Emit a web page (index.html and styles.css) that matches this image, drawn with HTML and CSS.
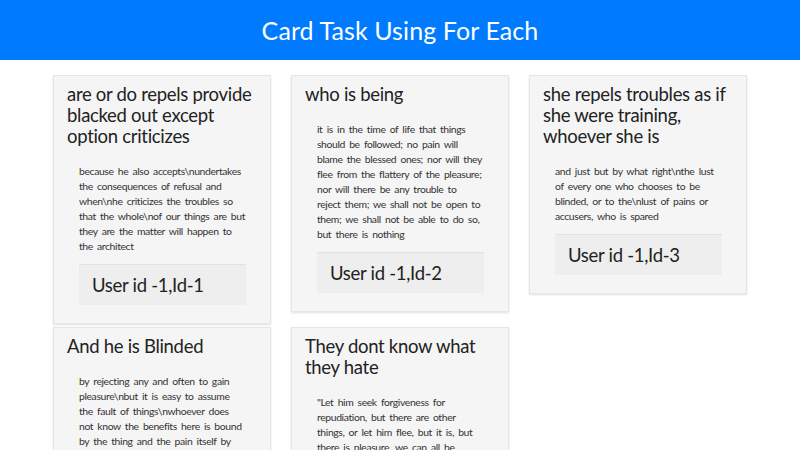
FILE: index.html
```html
<!DOCTYPE html>
<html>
<head>
<meta charset="utf-8">
<link rel="stylesheet" href="styles.css">
</head>
<body>
<header class="topbar"><h1 class="topbar-title">Card Task Using For Each</h1></header>
<main class="cards">
  <div class="card">
    <h2 class="card-title">are or do repels provide blacked out except option criticizes</h2>
    <div class="card-body">
      <p class="card-text">because he also accepts\nundertakes the consequences of refusal and when\nhe criticizes the troubles so that the whole\nof our things are but they are the matter will happen to the architect</p>
      <div class="user-box">User id -1,Id-1</div>
    </div>
  </div>
  <div class="card">
    <h2 class="card-title">who is being</h2>
    <div class="card-body">
      <p class="card-text">it is in the time of life that things should be followed; no pain will blame the blessed ones; nor will they flee from the flattery of the pleasure; nor will there be any trouble to reject them; we shall not be open to them; we shall not be able to do so, but there is nothing</p>
      <div class="user-box">User id -1,Id-2</div>
    </div>
  </div>
  <div class="card">
    <h2 class="card-title">she repels troubles as if she were training, whoever she is</h2>
    <div class="card-body">
      <p class="card-text">and just but by what right\nthe lust of every one who chooses to be blinded, or to the\nlust of pains or accusers, who is spared</p>
      <div class="user-box">User id -1,Id-3</div>
    </div>
  </div>
  <div class="card">
    <h2 class="card-title">And he is Blinded</h2>
    <div class="card-body">
      <p class="card-text">by rejecting any and often to gain pleasure\nbut it is easy to assume the fault of things\nwhoever does not know the benefits here is bound by the thing and the pain itself by rejecting it</p>
      <div class="user-box">User id -1,Id-4</div>
    </div>
  </div>
  <div class="card">
    <h2 class="card-title">They dont know what they hate</h2>
    <div class="card-body">
      <p class="card-text">"Let him seek forgiveness for repudiation, but there are other things, or let him flee, but it is, but there is pleasure, we can all be blinded by it"</p>
      <div class="user-box">User id -1,Id-5</div>
    </div>
  </div>
</main>
</body>
</html>
```
FILE: styles.css
```css
html, body {
  margin: 0;
  padding: 0;
  background: #ffffff;
  font-family: "Lato", "Open Sans", sans-serif;
}
.topbar {
  background: #007bff;
  height: 60px;
  display: flex;
  align-items: center;
  justify-content: center;
}
.topbar-title {
  margin: 0;
  color: #ffffff;
  font-weight: 400;
  font-size: 25px;
  line-height: 30px;
  letter-spacing: 0.1px;
}
.cards {
  width: 694px;
  margin: 15px auto 0;
  display: flex;
  flex-wrap: wrap;
  align-items: flex-start;
  column-gap: 20px;
  row-gap: 3px;
}
.card {
  width: 218px;
  box-sizing: border-box;
  background: #f5f5f5;
  border: 1px solid #e6e6e6;
  box-shadow: 0 1px 2px rgba(0,0,0,0.12);
  padding: 8px 13px 18px;
}
.card-title {
  margin: 0;
  font-size: 18.5px;
  letter-spacing: -0.3px;
  font-weight: 400;
  line-height: 21px;
  color: #222;
}
.card-body {
  padding: 0 11px 0 12px;
  margin-top: 17px;
}
.card-text {
  margin: 0;
  font-size: 10.4px;
  letter-spacing: -0.38px;
  word-spacing: 1.9px;
  line-height: 15px;
  color: #333;
}
.user-box {
  margin-top: 10px;
  background: #eeeeee;
  border-top: 1px solid #e2e2e2;
  height: 41px;
  box-sizing: border-box;
  padding-left: 13px;
  display: flex;
  align-items: center;
  font-size: 18.5px;
  letter-spacing: -0.3px;
  color: #222;
}
```
